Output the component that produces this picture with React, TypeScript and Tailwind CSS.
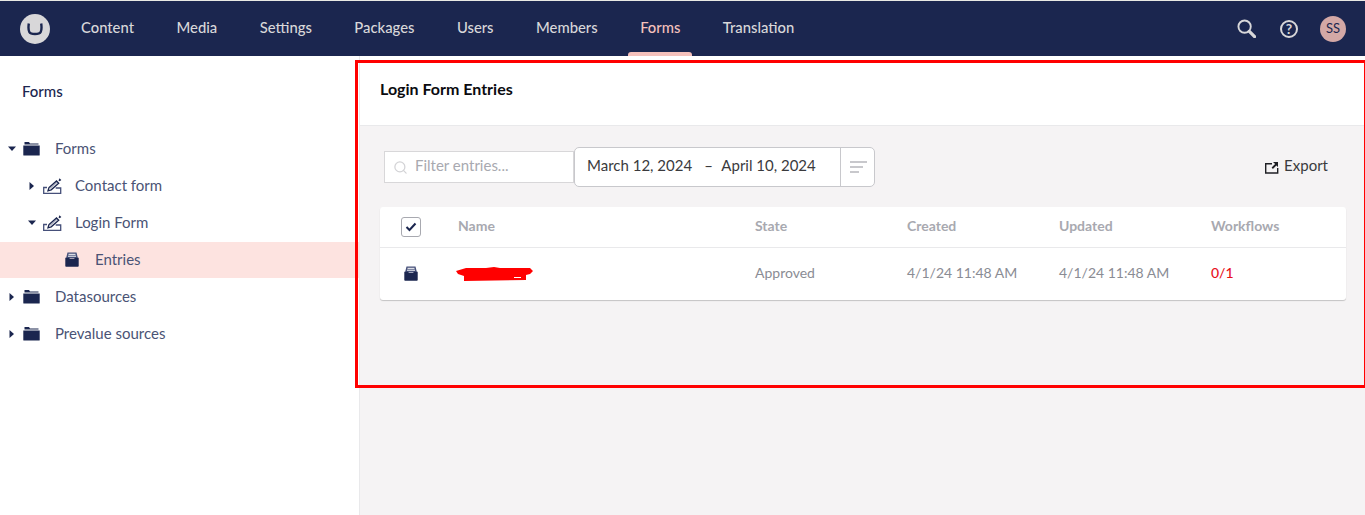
import { Search } from "lucide-react";

const navItems = ["Content", "Media", "Settings", "Packages", "Users", "Members", "Forms", "Translation"];

function Caret({ open }: { open?: boolean }) {
  return (
    <svg width="8" height="8" viewBox="0 0 8 8" className="shrink-0">
      {open ? <path d="M0 1.5h8L4 6z" fill="#1b264f" /> : <path d="M1.5 0v8L6 4z" fill="#1b264f" />}
    </svg>
  );
}

function FolderIcon() {
  return (
    <svg width="17" height="15" viewBox="0 0 17 15" className="shrink-0">
      <path d="M1.500 1h4.500l1 1.500h8.500v1H1.500z" fill="#1b264f" />
      <path d="M0.300 4.500h16.400V14a.5.5 0 0 1-.5.5H.8a.5.5 0 0 1-.5-.5z" fill="#1b264f" />
    </svg>
  );
}

function FormIcon() {
  return (
    <svg width="19" height="16" viewBox="0 0 19 16" className="shrink-0">
      <path d="M4 9.500H.7v5.800h17V10h-5" fill="none" stroke="#46507a" strokeWidth="1.300" />
      <path d="M5 12.800l1-3.300 7.500-6.500 2.200 2.300-7.500 6.500z" fill="none" stroke="#1b264f" strokeWidth="1.300" />
      <path d="M6.500 9.800l7-6 1 1-7 6z" fill="#1b264f" opacity="0.35" />
      <path d="M15.500 2.500L16.500 0.300l1.800 1.700-1.500 1.300z" fill="#1b264f" />
    </svg>
  );
}

function TrayIcon() {
  return (
    <svg width="14" height="15" viewBox="0 0 14 15" className="shrink-0">
      <path d="M2.500 0.500h9l1.500 6H1z" fill="#46507a" />
      <path d="M3.500 2.300h7M3 4.200h8" stroke="#fff" strokeWidth="1" />
      <path d="M0.300 5.800h3.700l1 1.200h4l1-1.200h3.700V14a.8.8 0 0 1-.8.800H1.100A.8.8 0 0 1 .3 14z" fill="#1b264f" />
    </svg>
  );
}

function TreeRow({
  label,
  indent,
  icon,
  caret,
  active,
}: {
  label: string;
  indent: string;
  icon: React.ReactNode;
  caret?: "open" | "closed";
  active?: boolean;
}) {
  return (
    <div className={`flex items-center h-[37px] text-[15px] text-[#4a5375] ${indent} ${active ? "bg-[#fde3e0] border-t border-white pb-[1px]" : ""}`}>
      <span className="w-[15px] shrink-0 flex">{caret && <Caret open={caret === "open"} />}</span>
      <span className="w-[32px] shrink-0 flex">{icon}</span>
      <span>{label}</span>
    </div>
  );
}

export default function App() {
  return (
    <div className="relative h-[515px] w-[1365px] overflow-hidden bg-white font-['Lato','Open_Sans',sans-serif]">
      <header className="h-[56px] bg-[#1b264f] border-t border-[#e9e9e4] flex items-center pl-[20px] pr-[19px]">
        <div className="w-[30px] h-[30px] rounded-full bg-[#d8d7d9] flex items-center justify-center mr-[19px]">
          <svg width="16" height="14" viewBox="0 0 16 14">
            <path d="M1.800 1.500C1.300 5 1.300 8 2.300 10c.7 1.400 2.500 2 5.700 2s5-.6 5.700-2c1-2 1-5 .5-8.500" fill="none" stroke="#1b264f" strokeWidth="2.400" />
          </svg>
        </div>
        <nav className="flex gap-[18.5px] h-full">
          {navItems.map((item) => (
            <div
              key={item}
              className={`relative flex items-center px-3 pb-[2px] text-[14.8px] font-medium ${item === "Forms" ? "text-[#f5c1bc]" : "text-[#d8d7d9]"}`}
            >
              {item}
              {item === "Forms" && <span className="absolute left-0 right-0 bottom-0 h-[4px] rounded-t-[3px] bg-[#f5c1bc]" />}
            </div>
          ))}
        </nav>
        <div className="ml-auto flex items-center text-[#d8d7d9]">
          <svg width="19" height="19" viewBox="0 0 20 20" className="mr-[24px]">
            <circle cx="8" cy="8" r="6.500" fill="none" stroke="#d8d7d9" strokeWidth="2" />
            <path d="M13 13l5.500 5.500" stroke="#d8d7d9" strokeWidth="3.400" strokeLinecap="round" />
          </svg>
          <span className="w-[18px] h-[18px] rounded-full border-2 border-[#d8d7d9] flex items-center justify-center text-[14px] font-bold mr-[22px]">?</span>
          <span className="w-[26px] h-[26px] rounded-full bg-[#d3a8a6] text-[#1b264f] text-[13px] flex items-center justify-center">SS</span>
        </div>
      </header>

      <div className="flex h-[459px]">
        <aside className="w-[360px] shrink-0 border-r border-[#e9e9eb] bg-white">
          <div className="pl-[22px] pt-[24px] h-[74px] text-[15px] font-medium text-[#1b264f]">Forms</div>
          <TreeRow label="Forms" indent="pl-[8px]" caret="open" icon={<FolderIcon />} />
          <TreeRow label="Contact form" indent="pl-[28px]" caret="closed" icon={<FormIcon />} />
          <TreeRow label="Login Form" indent="pl-[28px]" caret="open" icon={<FormIcon />} />
          <TreeRow label="Entries" indent="pl-[48px]" active icon={<span className="ml-[2px] flex"><TrayIcon /></span>} />
          <TreeRow label="Datasources" indent="pl-[8px]" caret="closed" icon={<FolderIcon />} />
          <TreeRow label="Prevalue sources" indent="pl-[8px]" caret="closed" icon={<FolderIcon />} />
        </aside>

        <main className="flex-1 bg-[#f5f3f4]">
          <div className="h-[70px] bg-white border-b border-[#e9e9eb] pl-[20px] pt-[21px] text-[16px] font-bold text-[#0b0b10]">
            Login Form Entries
          </div>

          <div className="flex items-center h-[40px] mt-[21px] pl-[24px] pr-[37px]">
            <div className="w-[190px] h-[32px] flex items-center bg-white border border-[#d8d7d9] pl-[8px] text-[15px] text-[#a8a9b0]">
              <Search size={15} strokeWidth={2} className="mr-[7px] text-[#d3d3d6]" />
              <span className="pb-[4px]">Filter entries...</span>
            </div>
            <div className="h-[40px] w-[301px] flex items-center bg-white border border-[#c8c8cc] rounded-[5px] text-[15px] text-[#3a3a3d]">
              <span className="pl-[12px] w-[265px] pb-[4px] flex">
                <span>March 12, 2024</span>
                <span className="ml-[12px] mr-[8.5px]">–</span>
                <span>April 10, 2024</span>
              </span>
              <span className="h-full flex-1 border-l border-[#c8c8cc] flex flex-col justify-center gap-[3px] pl-[9px]">
                <span className="block h-[2px] w-[17px] bg-[#c8c8cc]" />
                <span className="block h-[2px] w-[13px] bg-[#c8c8cc]" />
                <span className="block h-[2px] w-[9px] bg-[#c8c8cc]" />
              </span>
            </div>
            <div className="ml-auto flex items-center gap-[5px] text-[15px] text-[#3a3a3d]">
              <svg width="15" height="13" viewBox="0 0 15 13">
                <path d="M8 2.700H1.700v9.300h12V7" fill="none" stroke="#1f1f24" strokeWidth="1.400" />
                <path d="M9 1h5v5l-1.600-1.600-3.500 3.500-1.300-1.300 3.500-3.500z" fill="#1f1f24" />
              </svg>
              <span className="pb-[4px]">Export</span>
            </div>
          </div>

          <div className="mt-[20px] ml-[20px] w-[966px] bg-white rounded-[3px] shadow-[0_1px_1px_rgba(0,0,0,0.2)] text-[14px]">
            <div className="grid grid-cols-[78px_297px_152px_152px_152px_1fr] h-[41px] items-center border-b border-[#e9e9eb] font-bold text-[#a8a9b0]">
              <div className="pl-[21px]">
                <span className="w-[20px] h-[20px] rounded-[3px] border border-[#a8a9b0] flex items-center justify-center">
                  <svg width="12" height="10" viewBox="0 0 12 10">
                    <path d="M1.500 5l3 3 6-6.500" fill="none" stroke="#1b264f" strokeWidth="2" />
                  </svg>
                </span>
              </div>
              <div className="pb-[4px]">Name</div>
              <div className="pb-[4px]">State</div>
              <div className="pb-[4px]">Created</div>
              <div className="pb-[4px]">Updated</div>
              <div className="pb-[4px]">Workflows</div>
            </div>
            <div className="grid grid-cols-[78px_297px_152px_152px_152px_1fr] h-[52px] items-center text-[#8a8c94]">
              <div className="pl-[24px] pb-[2px]"><TrayIcon /></div>
              <div className="-ml-[3px]">
                <svg width="82" height="16" viewBox="0 0 80 16" className="block">
                  <path d="M0 5L10 2l20 0 8-1 6 1h30l3 3-3 3-4 1v5l-62 1V10L2 8z" fill="#ff0000" />
                  <path d="M58 11.500h7" stroke="#fff" strokeWidth="1" />
                </svg>
              </div>
              <div className="pb-[4px]">Approved</div>
              <div className="pb-[4px]">4/1/24 11:48 AM</div>
              <div className="pb-[4px]">4/1/24 11:48 AM</div>
              <div className="pb-[4px] font-medium text-[#e8101a]">0/1</div>
            </div>
          </div>
        </main>
      </div>

      <div className="absolute left-[355px] top-[60px] w-[1012px] h-[328px] border-[3px] border-[#ff0000] pointer-events-none" />
    </div>
  );
}
